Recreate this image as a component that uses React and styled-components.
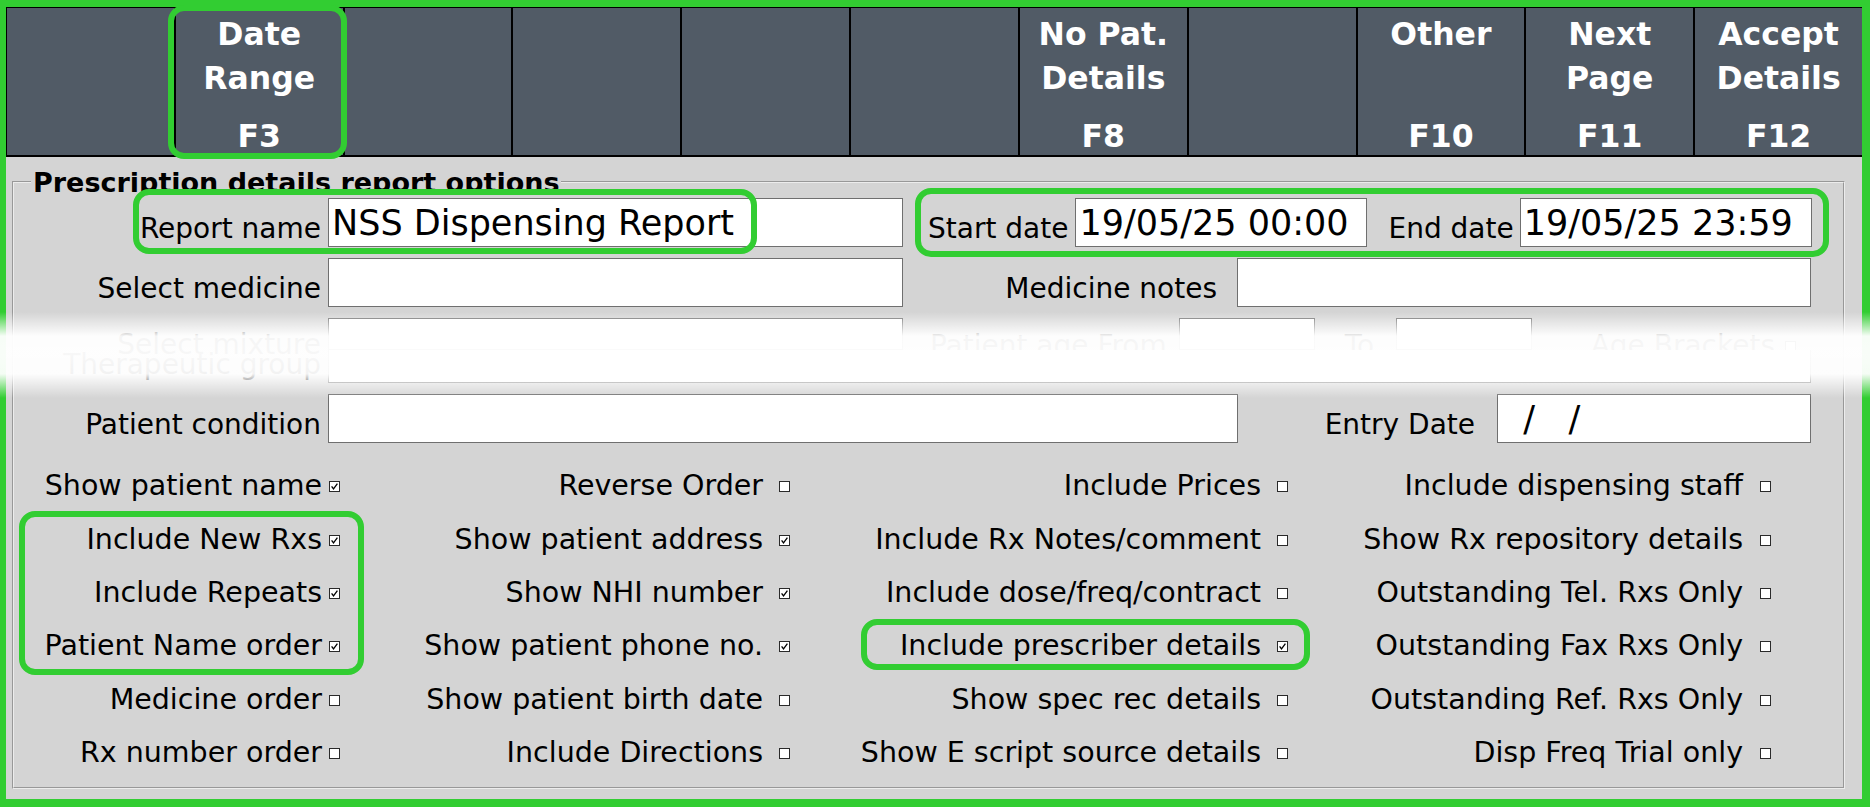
import React from 'react'
import styled, { createGlobalStyle } from 'styled-components'

const GREEN = '#32cd32'

const GlobalStyle = createGlobalStyle`
  html, body {
    margin: 0;
    padding: 0;
    background: #d4d4d4;
  }
  body {
    font-family: "DejaVu Sans", Verdana, sans-serif;
    color: #000;
  }
`

const Screen = styled.div`
  position: relative;
  width: 1870px;
  height: 807px;
  box-sizing: border-box;
  border-style: solid;
  border-color: ${GREEN};
  border-width: 7px 8px 8px 6px;
  background: #d4d4d4;
  display: flex;
  flex-direction: column;
`

// green marker ring drawn over a part of the screen
const Ringed = styled.div`
  position: relative;
  &::after {
    content: '';
    display: ${p => (p.$inset ? 'block' : 'none')};
    position: absolute;
    inset: ${p => p.$inset || 0};
    border: 6px solid ${GREEN};
    border-radius: 16px;
    pointer-events: none;
    z-index: 3;
  }
`

// function key strip along the top
const KeyBar = styled.div`
  display: grid;
  grid-template-columns: repeat(11, 1fr);
  gap: 2px;
  height: 150px;
  box-sizing: border-box;
  background: #000;
  border-top: 1px solid #000;
  border-left: 1px solid #000;
  border-bottom: 2px solid #000;
`

const KeyCell = styled(Ringed)`
  background: #515b66;
  color: #fff;
  font-weight: 700;
  font-size: 31.5px;
  text-align: center;
  display: flex;
  flex-direction: column;
  justify-content: space-between;
  padding-top: 4px;
`

const KeyLabel = styled.div`
  line-height: 44px;
  white-space: pre-line;
`

const KeyName = styled.div`
  line-height: 38px;
`

const Options = styled.fieldset`
  margin: 13px 17px 0 6px;
  padding: 4px 32px 8px 0;
  border: 2px groove #ececec;
  min-width: 0;
`

const Legend = styled.legend`
  margin-left: 17px;
  padding: 0 2px;
  height: 24px;
  overflow: hidden;
  font-weight: 700;
  font-size: 27px;
  line-height: 26px;
`

const Row = styled.div`
  display: flex;
  align-items: stretch;
  height: ${p => p.$h || 49}px;
  margin-bottom: 11px;
`

const Group = styled(Ringed)`
  display: flex;
  align-items: stretch;
  gap: ${p => p.$gap ?? 7}px;
  margin-left: ${p => p.$ml || 0}px;
`

const Label = styled.div`
  align-self: flex-end;
  font-size: 28px;
  line-height: 36px;
  text-align: right;
  white-space: nowrap;
  width: ${p => (p.$w ? `${p.$w}px` : 'auto')};
  flex: ${p => (p.$grow ? 1 : 'none')};
  margin-right: ${p => p.$mr || 0}px;
  margin-left: ${p => p.$ml || 0}px;
`

const StackLabel = styled(Label)`
  line-height: 20px;
  padding-bottom: 8px;
`

const Field = styled.div`
  box-sizing: border-box;
  flex: none;
  width: ${p => p.$w}px;
  height: ${p => (p.$h ? `${p.$h}px` : 'auto')};
  margin-left: ${p => p.$ml || 0}px;
  background: #fff;
  border: 1px solid #6f6f6f;
  padding: 0 3px;
  font-size: 35px;
  display: flex;
  align-items: center;
  white-space: pre;
  overflow: hidden;
`

const Stack = styled.div`
  display: flex;
  flex-direction: column;
  width: 1483px;
  margin-left: 7px;
`

const SubRow = styled.div`
  display: flex;
  align-items: stretch;
  height: ${p => p.$h}px;
`

const SmallLabel = styled.div`
  align-self: flex-start;
  margin: 12px ${p => p.$mr || 0}px 0 ${p => p.$ml || 0}px;
  font-size: 28px;
  line-height: 32px;
  white-space: nowrap;
  flex: ${p => (p.$grow ? 1 : 'none')};
  display: flex;
  align-items: center;
  justify-content: flex-end;
  gap: 10px;
`

const CheckGrid = styled.div`
  display: flex;
  margin-top: 16px;
`

const CheckColumn = styled.div`
  display: flex;
  flex-direction: column;
  width: ${p => p.$w}px;
  flex: none;
`

const CheckItem = styled.div`
  display: flex;
  justify-content: flex-end;
  align-items: center;
  gap: ${p => p.$gap}px;
  height: 53.4px;
  font-size: 28.5px;
  white-space: nowrap;

  svg {
    flex: none;
    margin-top: 2px;
  }
`

const Haze = styled.div`
  position: absolute;
  left: -6px;
  right: -8px;
  top: 305px;
  height: 86px;
  pointer-events: none;
  z-index: 5;
  background: linear-gradient(
    to bottom,
    rgba(255, 255, 255, 0) 0%,
    rgba(255, 255, 255, 0.96) 28%,
    rgba(255, 255, 255, 0.97) 50%,
    rgba(255, 255, 255, 0.95) 72%,
    rgba(255, 255, 255, 0) 100%
  );
`

const keys = [
  {},
  { label: 'Date\nRange', name: 'F3', ring: '-3px -4px -4px -8px' },
  {},
  {},
  {},
  {},
  { label: 'No Pat.\nDetails', name: 'F8' },
  {},
  { label: 'Other', name: 'F10' },
  { label: 'Next\nPage', name: 'F11' },
  { label: 'Accept\nDetails', name: 'F12' }
]

const columns = [
  {
    w: 326,
    gap: 7,
    items: [
      ['Show patient name', true],
      ['Include New Rxs', true, 'g'],
      ['Include Repeats', true, 'g'],
      ['Patient Name order', true, 'g'],
      ['Medicine order', false],
      ['Rx number order', false]
    ],
    ring: '-1px -24px -2px 5px'
  },
  {
    w: 450,
    gap: 16,
    items: [
      ['Reverse Order', false],
      ['Show patient address', true],
      ['Show NHI number', true],
      ['Show patient phone no.', true],
      ['Show patient birth date', false],
      ['Include Directions', false]
    ]
  },
  {
    w: 498,
    gap: 16,
    items: [
      ['Include Prices', false],
      ['Include Rx Notes/comment', false],
      ['Include dose/freq/contract', false],
      ['Include prescriber details', true, 'g'],
      ['Show spec rec details', false],
      ['Show E script source details', false]
    ],
    ring: '0 -22px 3px 71px'
  },
  {
    w: 483,
    gap: 17,
    items: [
      ['Include dispensing staff', false],
      ['Show Rx repository details', false],
      ['Outstanding Tel. Rxs Only', false],
      ['Outstanding Fax Rxs Only', false],
      ['Outstanding Ref. Rxs Only', false],
      ['Disp Freq Trial only', false]
    ]
  }
]

function Tick ({ checked }) {
  return (
    <svg width='11' height='11' viewBox='0 0 11 11'>
      <rect x='0.5' y='0.5' width='10' height='10' fill='#fff' stroke='#2a2a2a' />
      {checked && (
        <path d='M2.6 5.4 L4.5 8 L8.4 2.6' fill='none' stroke='#000' strokeWidth='1.3' />
      )}
    </svg>
  )
}

function KeyStrip () {
  return (
    <KeyBar>
      {keys.map((k, i) => (
        <KeyCell $inset={k.ring} key={i}>
          <KeyLabel>{k.label || ''}</KeyLabel>
          <KeyName>{k.name || ''}</KeyName>
        </KeyCell>
      ))}
    </KeyBar>
  )
}

function CheckColumnBlock ({ col }) {
  const out = []
  let group = []
  const flush = () => {
    if (group.length) {
      out.push(<Ringed $inset={col.ring} key={'g' + out.length}>{group}</Ringed>)
      group = []
    }
  }
  col.items.forEach(([text, checked, mark], i) => {
    const item = (
      <CheckItem $gap={col.gap} key={i}>
        {text}
        <Tick checked={checked} />
      </CheckItem>
    )
    if (mark) {
      group.push(item)
    } else {
      flush()
      out.push(item)
    }
  })
  flush()
  return <CheckColumn $w={col.w}>{out}</CheckColumn>
}

export default function App () {
  return (
    <>
      <GlobalStyle />
      <Screen>
        <KeyStrip />
        <Options>
          <Legend>Prescription details report options</Legend>

          <Row>
            <Group $inset='-9px 146px -7px 119px'>
              <Label $w={307}>Report name</Label>
              <Field $w={575}>NSS Dispensing Report</Field>
            </Group>
            <Group $ml={25} $gap={0} $inset='-10px -17px -10px -13px'>
              <Label $mr={7}>Start date</Label>
              <Field $w={292}>19/05/25 00:00</Field>
              <Label $ml={21} $mr={6}>End date</Label>
              <Field $w={292}>19/05/25 23:59</Field>
            </Group>
          </Row>

          <Row>
            <Label $w={307}>Select medicine</Label>
            <Field $w={575} $ml={7} />
            <Label $grow $mr={20}>Medicine notes</Label>
            <Field $w={574} />
          </Row>

          <Row $h={65}>
            <StackLabel $w={307}>Select mixture<br />Therapeutic group</StackLabel>
            <Stack>
              <SubRow $h={32}>
                <Field $w={575} />
                <SmallLabel $grow $mr={12}>Patient age From</SmallLabel>
                <Field $w={136} />
                <SmallLabel $ml={30} $mr={22}>To</SmallLabel>
                <Field $w={136} />
                <SmallLabel $grow $mr={15}>Age Brackets <Tick /></SmallLabel>
              </SubRow>
              <Field $w={1483} $h={33} style={{ borderTop: 'none' }} />
            </Stack>
          </Row>

          <Row>
            <Label $w={307}>Patient condition</Label>
            <Field $w={910} $ml={7} />
            <Label $grow $mr={22}>Entry Date</Label>
            <Field $w={314}>{'  /   /'}</Field>
          </Row>

          <CheckGrid>
            {columns.map((col, i) => <CheckColumnBlock col={col} key={i} />)}
          </CheckGrid>
        </Options>
        <Haze />
      </Screen>
    </>
  )
}
